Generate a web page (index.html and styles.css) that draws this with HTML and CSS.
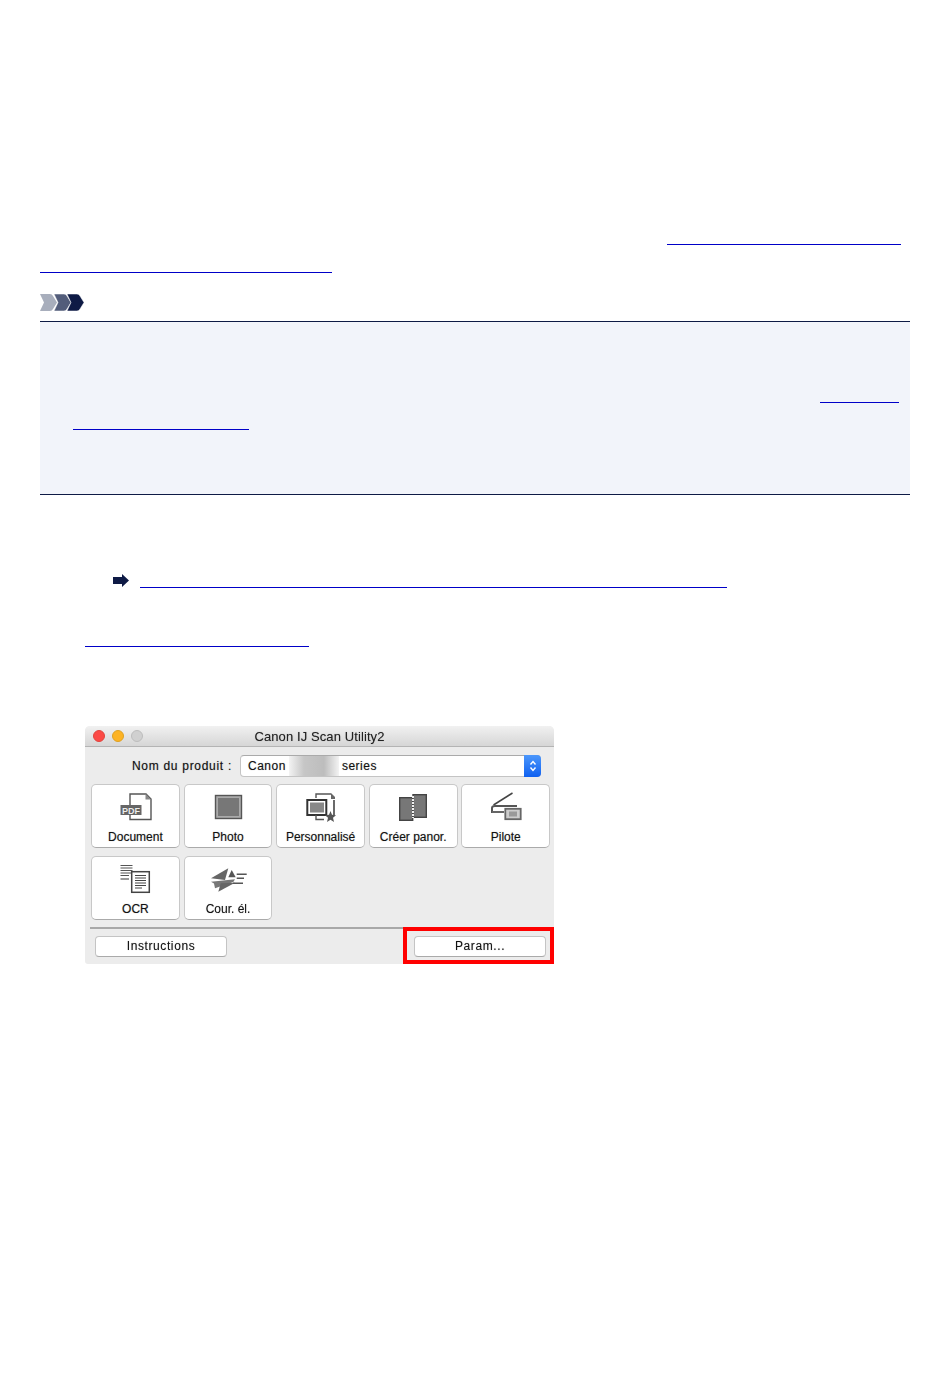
FILE: index.html
```html
<!DOCTYPE html>
<html>
<head>
    <title>Canon IJ Scan Utility2</title>
    <meta charset="utf-8">
    <link rel="stylesheet" href="styles.css">
</head>
<body>
    <div class="intro">
        <a class="link link-a" href="#"></a>
        <a class="link link-b" href="#"></a>
    </div>

    <svg class="note-icon" width="44" height="18" viewBox="0 0 44 18">
        <path d="M0 0H10Q12 0 13 2L17 8.500 13 15Q12 17 10 17H0L4 8.500Z" fill="#a8aebc"/>
        <path d="M14 0H24Q26 0 27 2L31 8.500 27 15Q26 17 24 17H14L18 8.500Z" fill="#525c7a" stroke="#fff" stroke-width=".5"/>
        <path d="M27 0H37Q39 0 40 2L44 8.500 40 15Q39 17 37 17H27L31 8.500Z" fill="#0e1a45" stroke="#fff" stroke-width=".5"/>
    </svg>

    <div class="note">
        <a class="link link-c" href="#"></a>
        <a class="link link-d" href="#"></a>
    </div>

    <div class="see-also">
        <svg class="arrow" width="16" height="13" viewBox="0 0 16 13">
            <path d="M0 3H9V0L16 6.500 9 13V10H0Z" fill="#0e1a45"/>
        </svg>
        <a class="link link-e" href="#"></a>
    </div>
    <a class="link link-f" href="#"></a>

    <div class="window">
        <div class="titlebar">
            <span class="dot dot-red"></span>
            <span class="dot dot-yellow"></span>
            <span class="dot dot-grey"></span>
            <span class="title">Canon IJ Scan Utility2</span>
        </div>

        <div class="product">
            <span class="product-label">Nom du produit :</span>
            <div class="select">
                <span class="select-name">Canon</span>
                <span class="select-blur"></span>
                <span class="select-name">series</span>
                <span class="select-arrows">
                    <svg width="10" height="16" viewBox="0 0 10 16">
                        <path d="M2.500 6.500L5 3.500 7.500 6.500M2.500 9.500L5 12.500 7.500 9.500" fill="none" stroke="#fff" stroke-width="1.400"/>
                    </svg>
                </span>
            </div>
        </div>

        <div class="tools">
            <div class="tool">
                <svg width="34" height="30" viewBox="0 0 34 30">
                    <path d="M12 13V2H28L33 7V27.500H12V23" fill="#fff" stroke="#555" stroke-width="1.400"/>
                    <path d="M27.500 1.500V7.500H33" fill="#888"/>
                    <rect x="2.500" y="13" width="21" height="10" fill="#666"/>
                    <text x="13" y="21.500" class="pdf">PDF</text>
                </svg>
                <span>Document</span>
            </div>
            <div class="tool">
                <svg width="30" height="30" viewBox="0 0 30 30">
                    <rect x="2.500" y="3.500" width="26" height="23" fill="#aaa" stroke="#555" stroke-width="1.400"/>
                    <rect x="5" y="6" width="21" height="18" fill="#777"/>
                </svg>
                <span>Photo</span>
            </div>
            <div class="tool">
                <svg width="34" height="30" viewBox="0 0 34 30">
                    <path d="M12 6V2H27" fill="none" stroke="#555" stroke-width="1.400"/>
                    <path d="M27 1L31 5V7H27Z" fill="#666"/>
                    <path d="M30 8V23" stroke="#444" stroke-width="1.600"/>
                    <rect x="3.300" y="8" width="19" height="15" fill="#fff" stroke="#333" stroke-width="2"/>
                    <rect x="6" y="10.500" width="14" height="10" fill="#888"/>
                    <path d="M12 23V27.500H20" fill="none" stroke="#555" stroke-width="1.400"/>
                    <path d="M26.500 19L28 22.800 32 23.200 29 25.800 30 30 26.500 27.700 23 30 24 25.800 21 23.200 25 22.800Z" fill="#555"/>
                </svg>
                <span>Personnalisé</span>
            </div>
            <div class="tool">
                <svg width="30" height="30" viewBox="0 0 30 30">
                    <rect x="1.700" y="5.700" width="13" height="22.600" fill="#777" stroke="#444" stroke-width="1.400"/>
                    <rect x="15" y="2.700" width="13.300" height="22.600" fill="#777" stroke="#444" stroke-width="1.400"/>
                    <path d="M15 4V26" stroke="#eee" stroke-width="2" stroke-dasharray="2 1"/>
                </svg>
                <span>Créer panor.</span>
            </div>
            <div class="tool">
                <svg width="34" height="30" viewBox="0 0 34 30">
                    <path d="M4.500 13L23.500 1" stroke="#444" stroke-width="1.500"/>
                    <path d="M3 21V16Q3 14 6 14H28" fill="none" stroke="#555" stroke-width="2"/>
                    <path d="M3 20H15" stroke="#666" stroke-width="2"/>
                    <rect x="16.300" y="16.800" width="15.400" height="10.400" fill="#ccc" stroke="#666" stroke-width="1.800"/>
                    <rect x="20" y="19.500" width="8" height="5" fill="#999"/>
                </svg>
                <span>Pilote</span>
            </div>
            <div class="tool">
                <svg width="32" height="30" viewBox="0 0 32 30">
                    <path d="M1.500 1.500H13.500M1.500 4H13.500M1.500 6.500H13.500M1.500 9H13.500M1.500 11.500H10" stroke="#555" stroke-width="1.200"/>
                    <path d="M1.500 15H10" stroke="#999" stroke-width="2"/>
                    <rect x="12.700" y="7.700" width="17.600" height="20.600" fill="#fff" stroke="#444" stroke-width="1.500"/>
                    <path d="M16 11.500H27M16 14H27M16 16.500H27M16 19H27M16 21.500H27M16 24H23" stroke="#444" stroke-width="1.200"/>
                </svg>
                <span>OCR</span>
            </div>
            <div class="tool">
                <svg width="38" height="30" viewBox="0 0 38 30">
                    <path d="M2 14.300L19.300 4.300 16 16Z" fill="#666"/>
                    <path d="M22.700 6L26.700 13.300H19.300Z" fill="#555"/>
                    <path d="M2 17.700L26 15.300 24.300 18 6 24.300 5 19.500Z" fill="#777"/>
                    <path d="M9.300 27.700L11.700 19.300 26 18.700Z" fill="#666"/>
                    <path d="M27.700 10.300H37.700M27.700 14.300H35M24 19.300H34" stroke="#555" stroke-width="1.400"/>
                </svg>
                <span>Cour. él.</span>
            </div>
        </div>

        <div class="footer">
            <div class="footer-left">
                <button class="btn btn-help">Instructions</button>
            </div>
            <div class="footer-right">
                <button class="btn btn-param">Param...</button>
            </div>
        </div>
    </div>
</body>
</html>
```

FILE: styles.css
```css
body {
    margin: 0;
    padding: 0 40px;
    background: #fff;
    font-family: "Liberation Sans", Arial, sans-serif;
}
.link {
    display: block;
    height: 1px;
    background: #0000c8;
}
.intro {
    padding-top: 244px;
}
.link-a {
    margin-left: 627px;
    width: 234px;
}
.link-b {
    margin-top: 27px;
    width: 292px;
}
.note-icon {
    display: block;
    margin-top: 21px;
}
.note {
    margin-top: 9px;
    height: 92px;
    padding-top: 80px;
    border-top: 1px solid #0e1a45;
    border-bottom: 1px solid #0e1a45;
    background: #f2f4fa;
}
.link-c {
    margin-left: 780px;
    width: 79px;
}
.link-d {
    margin: 26px 0 0 33px;
    width: 176px;
}
.see-also {
    display: flex;
    align-items: flex-end;
    margin-top: 79px;
    padding-left: 73px;
}
.arrow {
    margin-bottom: 2px;
}
.link-e {
    margin-left: 11px;
    margin-bottom: 1px;
    width: 587px;
}
.link-f {
    margin: 57px 0 0 45px;
    width: 224px;
}
.window {
    width: 469px;
    height: 238px;
    margin: 79px 0 0 45px;
    background: #ececec;
    border-radius: 5px 5px 3px 3px;
    font-size: 12px;
    color: #111;
    text-shadow: 0 0 1px rgba(0, 0, 0, 0.35);
    filter: blur(0.35px);
}
.titlebar {
    display: flex;
    align-items: center;
    gap: 7px;
    position: relative;
    height: 20px;
    padding-left: 8px;
    background: linear-gradient(#f1f1f1, #d6d6d6);
    border-bottom: 1px solid #b4b4b4;
    border-radius: 5px 5px 0 0;
}
.dot {
    width: 12px;
    height: 12px;
    border-radius: 50%;
    box-sizing: border-box;
}
.dot-red {
    background: #fc4a46;
    border: 1px solid #e0443e;
}
.dot-yellow {
    background: #fdb324;
    border: 1px solid #dea123;
}
.dot-grey {
    background: #d0d0d0;
    border: 1px solid #bdbdbd;
}
.title {
    position: absolute;
    left: 0;
    right: 0;
    text-align: center;
    font-size: 13px;
    letter-spacing: .1px;
    color: #222;
}
.product {
    display: flex;
    align-items: center;
    height: 22px;
    margin-top: 8px;
    padding-left: 47px;
}
.product-label {
    width: 108px;
    white-space: nowrap;
    letter-spacing: .7px;
}
.select {
    display: flex;
    align-items: center;
    width: 301px;
    height: 22px;
    box-sizing: border-box;
    padding-left: 7px;
    background: #fff;
    border: 1px solid #c4c4c4;
    border-top-color: #aaa;
    border-radius: 4px;
    position: relative;
}
.select-name {
    letter-spacing: .5px;
}
.select-blur {
    width: 50px;
    height: 20px;
    margin: 0 3px;
    background: linear-gradient(90deg, #f3f3f3, #c6c6c6 30%, #bdbdbd 70%, #f3f3f3);
}
.select-arrows {
    display: flex;
    align-items: center;
    justify-content: center;
    position: absolute;
    top: -1px;
    right: -1px;
    width: 17px;
    height: 22px;
    background: linear-gradient(#4c97fb, #0f60f0);
    border-radius: 0 4px 4px 0;
}
.tools {
    display: grid;
    grid-template-columns: repeat(5, 88.800px);
    grid-auto-rows: 64px;
    column-gap: 3.800px;
    row-gap: 8px;
    margin: 7px 0 0 6px;
}
.tool {
    display: flex;
    flex-direction: column;
    align-items: center;
    box-sizing: border-box;
    height: 64px;
    padding-top: 7px;
    background: #fff;
    border: 1px solid #c8c8c8;
    border-bottom-color: #aaa;
    border-radius: 5px;
}
.tool svg {
    height: 30px;
}
.tool span {
    margin-top: 8px;
    white-space: nowrap;
}
.pdf {
    font: bold 9px "Liberation Sans", Arial, sans-serif;
    fill: #eee;
    text-anchor: middle;
}
.footer {
    display: flex;
    margin-top: 7px;
}
.footer-left {
    width: 313px;
    margin-left: 5px;
    padding: 7px 0 0 5px;
    box-sizing: border-box;
    border-top: 2px solid #a8a8a8;
}
.footer-right {
    width: 151px;
    height: 37px;
    box-sizing: border-box;
    padding: 5px 0 0 7px;
    border: 4px solid #f00;
}
.btn {
    display: block;
    width: 132px;
    height: 21px;
    padding: 0 0 2px;
    background: #fff;
    border: 1px solid #c4c4c4;
    border-bottom-color: #aaa;
    border-radius: 4px;
    font: 12px "Liberation Sans", Arial, sans-serif;
    color: #111;
    text-shadow: 0 0 1px rgba(0, 0, 0, 0.35);
}
.btn-help {
    letter-spacing: .6px;
}
.btn-param {
    letter-spacing: .6px;
}
```
